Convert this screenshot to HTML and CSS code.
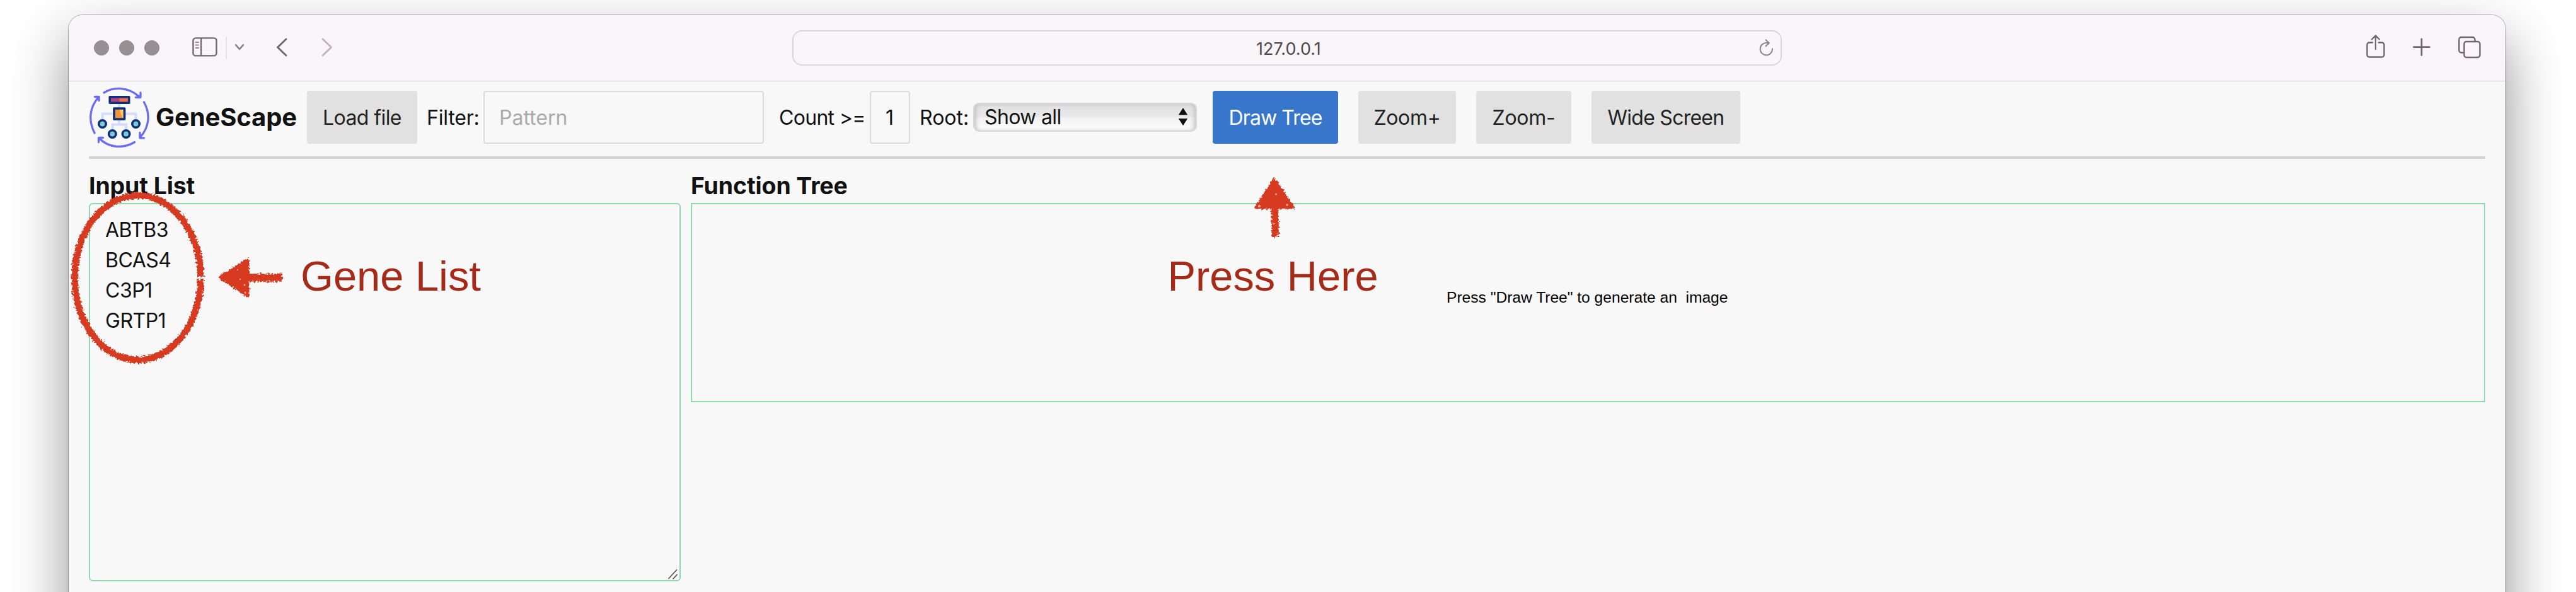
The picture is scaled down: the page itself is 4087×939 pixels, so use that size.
FILE: index.html
```html
<!DOCTYPE html>
<html lang="en">
<head>
<meta charset="utf-8">
<title>GeneScape</title>
<link rel="stylesheet" href="styles.css">
</head>
<body>
<main class="desktop">
  <section class="window">
    <header class="titlebar">
      <div class="side side-left">
        <div class="lights"><i></i><i></i><i></i></div>
        <svg class="ic-sidebar" width="40" height="32" viewBox="0 0 40 32"><g fill="none" stroke="#6f696e"><rect x="1.4" y="1.4" width="37" height="28" rx="4" stroke-width="2.4"/><path d="M14 1.5V29.5" stroke-width="2.2"/><path d="M5.5 8H10M5.5 12.5H10M5.5 17H10" stroke-width="1.6" stroke-linecap="round"/></g></svg>
        <span class="divider"></span>
        <svg class="ic-chevron" width="16" height="12" viewBox="0 0 16 12"><path d="M2 2.2L8 9L14 2.2" fill="none" stroke="#857f89" stroke-width="2.6" stroke-linecap="round" stroke-linejoin="round"/></svg>
        <svg class="ic-back" width="18" height="30" viewBox="0 0 18 30"><path d="M16 2L2.5 15L16 28" fill="none" stroke="#6b656b" stroke-width="2.8" stroke-linecap="round" stroke-linejoin="round"/></svg>
        <svg class="ic-forward" width="18" height="30" viewBox="0 0 18 30"><path d="M2 2L15.500 15L2 28" fill="none" stroke="#bbb5ba" stroke-width="2.8" stroke-linecap="round" stroke-linejoin="round"/></svg>
      </div>
      <div class="address">
        <span class="url">127.0.0.1</span>
        <svg class="reload" width="24" height="28" viewBox="0 0 24 28"><path d="M21 15.300A9.700 9.700 0 1 1 11.500 6H15.500M10.500 1.300L15.700 6.200L10.500 11.300" fill="none" stroke="#8a858a" stroke-width="2" stroke-linecap="round" stroke-linejoin="round"/></svg>
      </div>
      <div class="side side-right">
        <svg width="30" height="38" viewBox="0 0 30 38"><path d="M10 12.500H5A3.500 3.500 0 0 0 1.500 16V32A3.500 3.500 0 0 0 5 35.500H25A3.500 3.500 0 0 0 28.500 32V16A3.500 3.500 0 0 0 25 12.500H20M15 23V1.500M9 7.500L15 1.500L21 7.500" fill="none" stroke="#6f696e" stroke-width="2.400" stroke-linecap="round" stroke-linejoin="round"/></svg>
        <svg width="28" height="38" viewBox="0 0 28 38"><path d="M14 7V32.500M1.500 19.700H26.500" stroke="#6f696e" stroke-width="2.800" stroke-linecap="round"/></svg>
        <svg width="36" height="38" viewBox="0 0 36 38"><g fill="none" stroke="#6f696e" stroke-width="2.400"><rect x="9.500" y="11" width="25" height="25" rx="3.500"/><path d="M9.500 28.500H5A3.500 3.500 0 0 1 1.400 25V7.500A3.500 3.500 0 0 1 5 4H23A3.500 3.500 0 0 1 26.500 7.500V11"/></g></svg>
      </div>
    </header>

    <div class="page">
      <nav class="toolbar">
        <svg class="logo" width="96" height="96" viewBox="0 0 96 96">
          <g fill="none" stroke="#6a6df0" stroke-width="3.300" stroke-linecap="round" stroke-linejoin="round">
            <path d="M24 9C40 -1 62 0 79 14.500M82 9V16.500H74.500"/>
            <path d="M87.500 24C98 43 96 64 81 80M81 72.500V80.800H87.500"/>
            <path d="M72.500 87.500C55 98 32 97 17 82M15.500 87.500V80.500H22.500"/>
            <path d="M9 73C-1 53 1 33 14.500 17M9.500 15.500H16V21.500"/>
          </g>
          <path d="M48 26V36M21.500 54V42.500H74.500V54M48 50V59.500M37.500 70V59.500H59V70" fill="none" stroke="#d5dcfb" stroke-width="4"/>
          <rect x="33.200" y="15.700" width="30.500" height="9.500" fill="#aa4584"/><rect x="48.500" y="15.700" width="15" height="9.500" fill="#ef6b55"/>
          <rect x="33.200" y="15.700" width="30.500" height="9.500" fill="none" stroke="#0f2f79" stroke-width="3.500" stroke-linejoin="round"/>
          <rect x="40" y="34" width="16.500" height="17" fill="#f0953a"/><path d="M48 34H56.500V51H54Z" fill="#f9cc68"/>
          <rect x="40" y="34" width="16.500" height="17" fill="none" stroke="#0f2f79" stroke-width="3.700" stroke-linejoin="round"/>
          <g fill="#7cc9cf" stroke="#0f2f79" stroke-width="3.600"><circle cx="21.500" cy="58.500" r="5.700"/><circle cx="74.500" cy="58.500" r="5.700"/><circle cx="37.300" cy="74.500" r="5.700"/><circle cx="59" cy="74.500" r="5.700"/></g>
        </svg>
        <h1 class="brand">GeneScape</h1>
        <button class="btn load">Load file</button>
        <label class="lab filter">Filter:</label>
        <div class="field pattern">Pattern</div>
        <label class="lab count">Count &gt;=</label>
        <div class="field number">1</div>
        <label class="lab root">Root:</label>
        <div class="select"><span>Show all</span><svg width="16" height="30" viewBox="0 0 16 30"><path d="M8 1L15.200 12.200H.8ZM.8 18H15.200L8 29.200Z" fill="#111"/></svg></div>
        <button class="btn primary">Draw Tree</button>
        <button class="btn zoom-in">Zoom+</button>
        <button class="btn zoom-out">Zoom-</button>
        <button class="btn wide">Wide Screen</button>
      </nav>
      <div class="columns">
        <section class="inputs">
          <h3>Input List</h3>
          <div class="genes">
            <div>ABTB3</div><div>BCAS4</div><div>C3P1</div><div>GRTP1</div>
            <svg class="grip" width="18" height="18" viewBox="0 0 18 18"><path d="M2 15.500L14.500 2M9 16L15 9.700" stroke="#fff" stroke-width="4"/><path d="M2 15.500L14.500 2M9 16L15 9.700" stroke="#555" stroke-width="1.800" stroke-linecap="round"/></svg>
          </div>
        </section>
        <section class="tree">
          <h3>Function Tree</h3>
          <div class="canvas">Press "Draw Tree" to generate an&nbsp; image</div>
        </section>
      </div>
    </div>
  </section>

  <svg class="notes" width="4087" height="939" viewBox="0 0 4087 939">
    <defs>
      <filter id="crayon" filterUnits="userSpaceOnUse" x="90" y="260" width="2000" height="340">
        <feTurbulence type="fractalNoise" baseFrequency="0.32" numOctaves="3" seed="7" result="n"/>
        <feDisplacementMap in="SourceGraphic" in2="n" scale="8" xChannelSelector="R" yChannelSelector="G"/>
      </filter>
    </defs>
    <g filter="url(#crayon)" fill="#d63a20" stroke="#d63a20" stroke-linejoin="round">
      <path d="M318.500 438A100 130.500 0 1 0 318.500 443" fill="none" stroke-width="10.500"/>
      <path d="M349 440L393 412V469Z" stroke-width="5"/>
      <path d="M390 440.500H448" stroke-width="12.500"/>
      <path d="M2022 285L2051 329H1993Z" stroke-width="5"/>
      <path d="M2023 326V376" stroke-width="11.500"/>
    </g>
    <g fill="#f3a998">
      <circle cx="2024.500" cy="308" r="1.500"/><circle cx="1998" cy="327" r="2"/><circle cx="2042" cy="325" r="1.800"/><circle cx="2021" cy="355" r="1.300"/>
      <circle cx="388" cy="452" r="1.500"/><circle cx="389" cy="464" r="1.500"/><circle cx="377" cy="428" r="1"/><circle cx="381" cy="443" r="1.200"/>
    </g>
    <text class="note" x="477" y="461">Gene List</text>
    <text class="note" x="1852.500" y="461">Press Here</text>
  </svg>
</main>
</body>
</html>
```
FILE: styles.css
```css
* { box-sizing: border-box; }
body { margin: 0; background: #fff; font-family: Inter, "Liberation Sans", sans-serif; color: #111; }
.desktop { position: relative; height: 939px; padding: 24px 112px 0 109px; overflow: hidden; }
.window {
  height: 1200px;
  background: #f8f8f8;
  border-radius: 22px;
  box-shadow: 0 0 1px 1px rgba(0,0,0,.28), 0 40px 90px rgba(0,0,0,.44);
}

/* Browser title bar */
.titlebar {
  display: flex; justify-content: space-between; height: 105px;
  background: #faf5f9; border-bottom: 1px solid #cfcbce;
  border-radius: 22px 22px 0 0;
}
.side { display: flex; align-items: center; width: 1148px; height: 104px; }
.side-left { padding-left: 40px; }
.side-left svg { margin-bottom: 2px; }
.lights { display: flex; gap: 16px; }
.lights i { width: 24px; height: 24px; border-radius: 50%; background: #969093; border: 1px solid #868083; }
.ic-sidebar { margin-left: 52px; }
.divider { width: 2px; height: 36px; margin-left: 13px; background: #e8e3e8; }
.ic-chevron { margin-left: 12px; }
.ic-back { margin-left: 50px; }
.ic-forward { margin-left: 54px; }
.address {
  display: flex; align-items: center; width: 1570px; height: 56px; margin-top: 24px;
  border: 2px solid #dbd6db; border-radius: 15px; padding: 0 10px 0 734px;
}
.url { padding-top: 2px; font-size: 27px; color: #4c484c; }
.reload { margin-left: auto; }
.side-right { justify-content: flex-end; gap: 44px; padding: 0 39px 4px 0; }

/* GeneScape page */
.page { padding: 15px 32px 0; }
.toolbar { display: flex; align-items: center; height: 108px; padding-bottom: 20px; border-bottom: 4px solid #d3d3d3; }
.toolbar > * { flex: none; white-space: nowrap; }
.brand { margin: 0; padding-left: 10px; width: 250px; font-size: 40px; line-height: 48px; letter-spacing: -.1px; }
.btn {
  height: 84px; padding: 0; border: 0; border-radius: 4px;
  background: #e1e1e1; color: #222; font: 32px Inter, sans-serif; text-align: center;
}
.load { width: 175px; letter-spacing: -.6px; }
.lab, .field { font-size: 32px; }
.filter { width: 90px; margin-left: 15px; letter-spacing: -.2px; }
.field { display: flex; align-items: center; height: 84px; border: 2px solid #dbdbdb; border-radius: 4px; padding-left: 23px; }
.pattern { width: 445px; color: #aaa; }
.count { width: 144px; margin-left: 24px; letter-spacing: -.7px; }
.number { width: 64px; }
.root { width: 85px; margin-left: 15px; }
.select {
  display: flex; align-items: center; justify-content: space-between; width: 355px; height: 46px;
  padding: 0 12px 2px 16px; border: 2px solid #d8d8d8; border-radius: 9px;
  background: linear-gradient(#e0e0e0, #e9e9e9 50%, #f1f1f1 51%, #fcfcfc);
  box-shadow: inset 5px 0 7px -3px #bdbdbd, inset -5px 0 7px -3px #bdbdbd;
  font-size: 32px; letter-spacing: -.65px;
}
.primary { width: 199px; margin-left: 25px; background: #3876cc; color: #fff; letter-spacing: -.9px; }
.zoom-in { width: 155px; margin-left: 32px; letter-spacing: -.3px; }
.zoom-out { width: 151px; margin-left: 32px; letter-spacing: -.3px; }
.wide { width: 236px; margin-left: 32px; letter-spacing: -.75px; }

.columns { display: flex; align-items: flex-start; gap: 16px; padding-top: 20px; }
h3 { margin: 0; height: 50px; font-size: 37.44px; line-height: 45px; letter-spacing: -.1px; }
.inputs { width: 939px; }
.genes {
  position: relative; height: 600px; padding: 17px 24px; border: 2px solid #8fd9ae; border-radius: 6px;
  font-size: 32px; line-height: 48px; letter-spacing: -.5px;
}
.grip { position: absolute; right: 1px; bottom: 0; }
.tree { flex: 1; }
.canvas {
  height: 316px; padding: 131px 0 0 1197px; border: 2px solid #8fd9ae; color: #000;
  font: 24.7px/34px "Liberation Sans", Arial, sans-serif; letter-spacing: -.05px; white-space: nowrap;
}

/* Annotations drawn over the window */
.notes { position: absolute; left: 0; top: 0; }
.note { font: 66.8px "Liberation Sans", Arial, sans-serif; fill: #a52b18; }
```
